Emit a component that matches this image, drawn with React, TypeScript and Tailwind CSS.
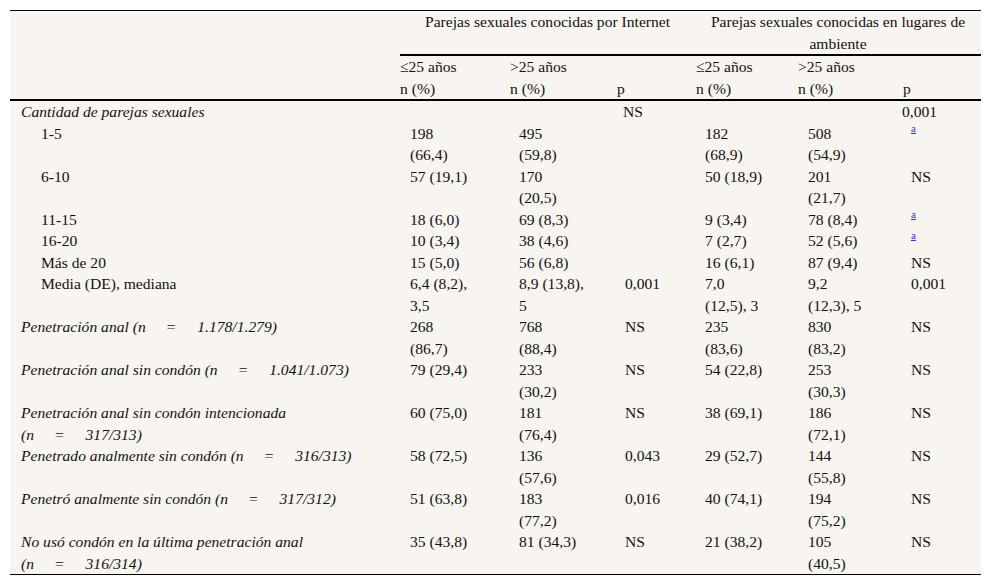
import React from 'react';

type Row = {
  label: React.ReactNode;
  sub?: boolean;
  cells: string[];
};

// "(n = x/y)" with the wide gaps around the equals sign
const N: React.FC<{ v: string }> = ({ v }) => (
  <>
    (n<span className="inline-block w-[20px]" />=<span className="inline-block w-[21px]" />{v})
  </>
);

const rows: Row[] = [
  { label: '1-5', sub: true, cells: ['198|(66,4)', '495|(59,8)', '', '182|(68,9)', '508|(54,9)', 'a'] },
  { label: '6-10', sub: true, cells: ['57 (19,1)', '170|(20,5)', '', '50 (18,9)', '201|(21,7)', 'NS'] },
  { label: '11-15', sub: true, cells: ['18 (6,0)', '69 (8,3)', '', '9 (3,4)', '78 (8,4)', 'a'] },
  { label: '16-20', sub: true, cells: ['10 (3,4)', '38 (4,6)', '', '7 (2,7)', '52 (5,6)', 'a'] },
  { label: 'Más de 20', sub: true, cells: ['15 (5,0)', '56 (6,8)', '', '16 (6,1)', '87 (9,4)', 'NS'] },
  { label: 'Media (DE), mediana', sub: true, cells: ['6,4 (8,2),|3,5', '8,9 (13,8),|5', '0,001', '7,0|(12,5), 3', '9,2|(12,3), 5', '0,001'] },
  {
    label: <>Penetración anal <N v="1.178/1.279" /></>,
    cells: ['268|(86,7)', '768|(88,4)', 'NS', '235|(83,6)', '830|(83,2)', 'NS'],
  },
  {
    label: <>Penetración anal sin condón <N v="1.041/1.073" /></>,
    cells: ['79 (29,4)', '233|(30,2)', 'NS', '54 (22,8)', '253|(30,3)', 'NS'],
  },
  {
    label: <>Penetración anal sin condón intencionada<br /><N v="317/313" /></>,
    cells: ['60 (75,0)', '181|(76,4)', 'NS', '38 (69,1)', '186|(72,1)', 'NS'],
  },
  {
    label: <>Penetrado analmente sin condón <N v="316/313" /></>,
    cells: ['58 (72,5)', '136|(57,6)', '0,043', '29 (52,7)', '144|(55,8)', 'NS'],
  },
  {
    label: <>Penetró analmente sin condón <N v="317/312" /></>,
    cells: ['51 (63,8)', '183|(77,2)', '0,016', '40 (74,1)', '194|(75,2)', 'NS'],
  },
  {
    label: <>No usó condón en la última penetración anal<br /><N v="316/314" /></>,
    cells: ['35 (43,8)', '81 (34,3)', 'NS', '21 (38,2)', '105|(40,5)', 'NS'],
  },
];

const renderValue = (value: string) => {
  if (value === 'a') {
    return (
      <a href="#" className="align-top text-[11px] leading-none text-[#2f2fff] underline">
        a
      </a>
    );
  }
  return value.split('|').map((part, i) => (
    <React.Fragment key={i}>
      {i > 0 && <br />}
      {part}
    </React.Fragment>
  ));
};

const App: React.FC = () => {
  return (
    <div className="min-h-screen bg-white px-[10px] pt-[10px]">
      <table
        className="w-[971px] table-fixed border-separate border-spacing-0 border-t border-black bg-[#f8f5f0] text-[15.6px] leading-[21.5px] text-[#111]"
        style={{ fontFamily: '"Liberation Serif", "Times New Roman", serif' }}
      >
        <colgroup>
          <col className="w-[390px]" />
          <col className="w-[109px]" />
          <col className="w-[106px]" />
          <col className="w-[80px]" />
          <col className="w-[103px]" />
          <col className="w-[103px]" />
          <col className="w-[80px]" />
        </colgroup>
        <thead>
          <tr>
            <th rowSpan={3} className="border-b-2 border-black p-0" />
            <th colSpan={3} className="h-[43px] border-b-2 border-black p-0 text-center align-top font-normal">
              Parejas sexuales conocidas por Internet
            </th>
            <th colSpan={3} className="h-[43px] border-b-2 border-black p-0 text-center align-top font-normal">
              Parejas sexuales conocidas en lugares de
              <br />
              ambiente
            </th>
          </tr>
          <tr className="text-left">
            <th className="p-0 align-top font-normal">≤25 años</th>
            <th className="pl-[1px] align-top font-normal">&gt;25 años</th>
            <th className="p-0" />
            <th className="pl-[1px] align-top font-normal">≤25 años</th>
            <th className="p-0 align-top font-normal">&gt;25 años</th>
            <th className="p-0" />
          </tr>
          <tr className="text-left">
            <th className="border-b-2 border-black p-0 align-top font-normal">n (%)</th>
            <th className="border-b-2 border-black pl-[1px] align-top font-normal">n (%)</th>
            <th className="border-b-2 border-black pl-[2px] align-top font-normal">p</th>
            <th className="border-b-2 border-black pl-[1px] align-top font-normal">n (%)</th>
            <th className="border-b-2 border-black p-0 align-top font-normal">n (%)</th>
            <th className="border-b-2 border-black pl-[2px] align-top font-normal">p</th>
          </tr>
        </thead>
        <tbody className="align-top">
          <tr>
            <td className="pl-[11px] italic">Cantidad de parejas sexuales</td>
            <td />
            <td />
            <td className="pl-[8px]">NS</td>
            <td />
            <td />
            <td className="pl-[1px]">0,001</td>
          </tr>
          {rows.map((row, r) => (
            <tr key={r}>
              <td
                className={`whitespace-nowrap ${row.sub ? 'pl-[31px]' : 'pl-[11px] italic'} ${
                  r === rows.length - 1 ? 'border-b border-black' : ''
                }`}
              >
                {row.label}
              </td>
              {row.cells.map((cell, c) => (
                <td
                  key={c}
                  className={`whitespace-nowrap pl-[10px] ${r === rows.length - 1 ? 'border-b border-black' : ''}`}
                >
                  {renderValue(cell)}
                </td>
              ))}
            </tr>
          ))}
        </tbody>
      </table>
    </div>
  );
};

export default App;
